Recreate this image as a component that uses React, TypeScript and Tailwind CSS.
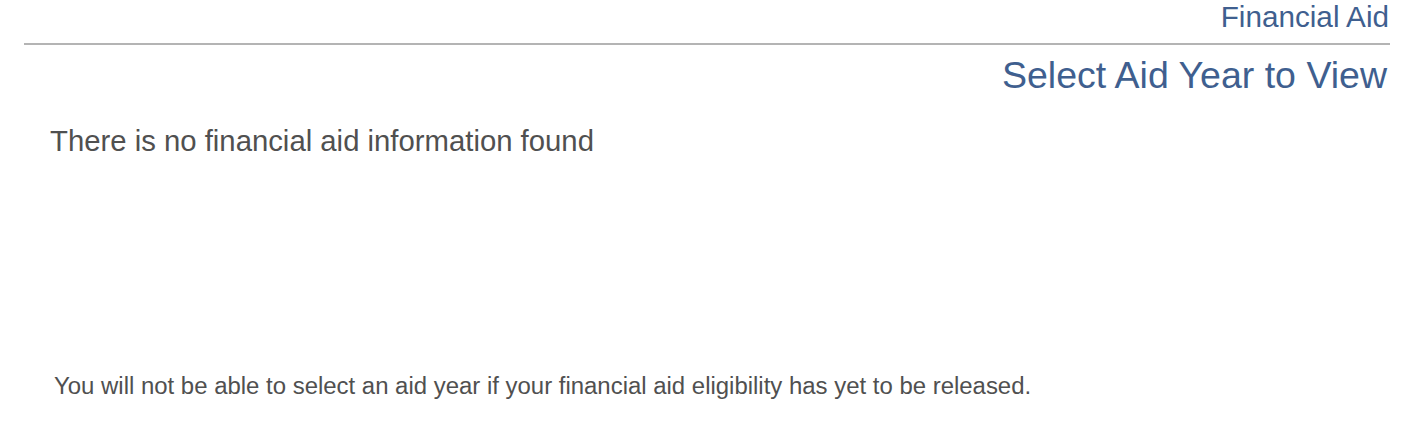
export default function App() {
  return (
    <div className="min-h-screen bg-white px-[24px] pr-[25px] font-['Liberation_Sans',Arial,sans-serif]">
      {/* Header */}
      <div className="text-right text-[29.7px] leading-[34px] text-[#3f5f8f] pr-[1px]">Financial Aid</div>
      <div className="mt-[9px] border-t-2 border-[#b4b4b4]" />
      <h1 className="mt-[9px] text-right text-[37.5px] leading-[42px] text-[#3f5f8f] pr-[3px]">
        Select Aid Year to View
      </h1>

      {/* Body */}
      <p className="mt-[28px] pl-[26px] text-[29.3px] leading-[34px] text-[#505050]">
        There is no financial aid information found
      </p>

      <p className="mt-[214px] pl-[30px] text-[23.95px] leading-[28px] text-[#505050]">
        You will not be able to select an aid year if your financial aid eligibility has yet to be released.
      </p>
    </div>
  );
}
